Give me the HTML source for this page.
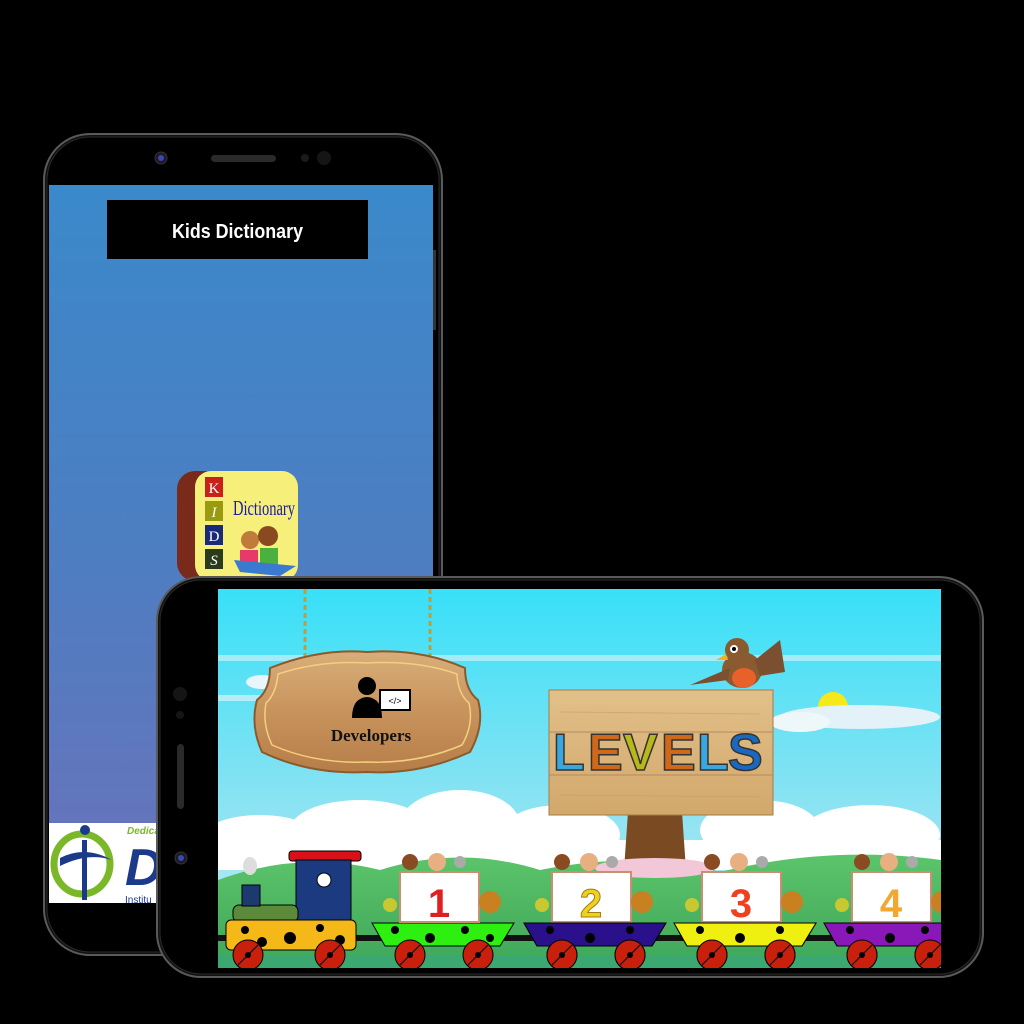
<!DOCTYPE html>
<html><head><style>
html,body{margin:0;padding:0;background:#000;width:1024px;height:1024px;overflow:hidden;font-family:"Liberation Sans",sans-serif}
</style></head><body>
<svg width="1024" height="1024" viewBox="0 0 1024 1024" xmlns="http://www.w3.org/2000/svg">
<defs>
<linearGradient id="lg" x1="0" y1="0" x2="0" y2="1"><stop offset="0" stop-color="#3a89ca"/><stop offset="0.5" stop-color="#4d7ec2"/><stop offset="1" stop-color="#6a72ba"/></linearGradient>
<linearGradient id="sky" x1="0" y1="0" x2="0" y2="1"><stop offset="0" stop-color="#38e0f8"/><stop offset="0.6" stop-color="#8fe3f2"/><stop offset="1" stop-color="#c8eef2"/></linearGradient>
<linearGradient id="wood" x1="0" y1="0" x2="0" y2="1"><stop offset="0" stop-color="#d9ae7a"/><stop offset="0.5" stop-color="#c8935c"/><stop offset="1" stop-color="#b67d48"/></linearGradient>
<linearGradient id="board" x1="0" y1="0" x2="0" y2="1"><stop offset="0" stop-color="#e2c089"/><stop offset="1" stop-color="#d2a86c"/></linearGradient>
<linearGradient id="grass" x1="0" y1="0" x2="0" y2="1"><stop offset="0" stop-color="#5cc46a"/><stop offset="1" stop-color="#3ea659"/></linearGradient>
</defs>
<!-- left phone -->
<rect x="44" y="134" width="398" height="821" rx="46" fill="#111" stroke="#5a5a5a" stroke-width="2"/>
<rect x="47" y="137" width="392" height="815" rx="43" fill="#000" stroke="#2a2a2a" stroke-width="1"/>
<circle cx="161" cy="158" r="6" fill="#1a1a2a" stroke="#333"/><circle cx="161" cy="158" r="3" fill="#3b49a8"/>
<rect x="211" y="155" width="65" height="7" rx="3.5" fill="#2a2a2a"/>
<circle cx="305" cy="158" r="4" fill="#1a1a1a"/><circle cx="324" cy="158" r="7" fill="#151515"/>
<rect x="49" y="185" width="384" height="718" fill="url(#lg)"/>
<rect x="107" y="200" width="261" height="59" fill="#000"/>
<text x="172" y="238" fill="#fff" font-size="20" font-weight="bold" textLength="131" lengthAdjust="spacingAndGlyphs">Kids Dictionary</text>
<rect x="49" y="823" width="384" height="80" fill="#fff"/>
<ellipse cx="82" cy="864" rx="28" ry="30" fill="none" stroke="#7ab82a" stroke-width="7"/>
<rect x="82" y="840" width="5" height="60" fill="#1c3a8a"/><circle cx="85" cy="830" r="5" fill="#1c3a8a"/>
<path d="M60 858 Q85 845 112 860 Q88 852 60 866Z" fill="#1c3a8a"/>
<text x="127" y="834" fill="#7ab82a" font-size="10" font-style="italic" font-weight="bold">Dedica</text>
<text x="125" y="885" fill="#1c3a8a" font-size="52" font-weight="bold" font-style="italic">D</text>
<text x="125" y="903" fill="#1c3a8a" font-size="10">Institu</text>
<rect x="433" y="250" width="3" height="80" fill="#333"/>
<!-- app icon -->
<rect x="177" y="471" width="121" height="110" rx="18" fill="#7a2a1a"/>
<rect x="195" y="471" width="103" height="110" rx="16" fill="#f6ef7a"/>
<rect x="205" y="477" width="18" height="20" fill="#c8201a"/><text x="214" y="493" text-anchor="middle" fill="#fff" font-size="15" font-family="Liberation Serif">K</text>
<rect x="205" y="501" width="18" height="20" fill="#9a9a10"/><text x="214" y="517" text-anchor="middle" fill="#fff" font-size="15" font-family="Liberation Serif" font-style="italic">I</text>
<rect x="205" y="525" width="18" height="20" fill="#1a2a7a"/><text x="214" y="541" text-anchor="middle" fill="#fff" font-size="15" font-family="Liberation Serif">D</text>
<rect x="205" y="549" width="18" height="20" fill="#2a3a1a"/><text x="214" y="565" text-anchor="middle" fill="#fff" font-size="15" font-family="Liberation Serif" font-style="italic">S</text>
<text x="233" y="515" fill="#1a1aa0" font-size="21" font-family="Liberation Serif" textLength="62" lengthAdjust="spacingAndGlyphs">Dictionary</text>
<circle cx="250" cy="540" r="9" fill="#c07a3a"/><circle cx="268" cy="536" r="10" fill="#8a4a20"/>
<rect x="240" y="550" width="18" height="22" fill="#e83a6a"/><rect x="260" y="548" width="18" height="24" fill="#4ab040"/>
<path d="M234 560 L296 566 L280 576 L240 572Z" fill="#3a7ad0"/>
<!-- landscape phone -->
<rect x="157" y="577" width="826" height="400" rx="44" fill="#111" stroke="#5a5a5a" stroke-width="2"/>
<rect x="160" y="580" width="820" height="394" rx="41" fill="#000" stroke="#2a2a2a"/>
<circle cx="180" cy="694" r="7" fill="#151515"/><circle cx="180" cy="715" r="4" fill="#151515"/>
<rect x="177" y="744" width="7" height="65" rx="3.5" fill="#2a2a2a"/>
<circle cx="181" cy="858" r="6" fill="#1a1a2a" stroke="#333"/><circle cx="181" cy="858" r="3" fill="#3b49a8"/>
<svg x="218" y="589" width="723" height="379" viewBox="218 589 723 379">
<rect x="218" y="589" width="723" height="379" fill="url(#sky)"/>
<rect x="218" y="655" width="723" height="6" fill="#d8f2f8" opacity="0.6"/>
<rect x="218" y="695" width="60" height="6" fill="#d8f2f8" opacity="0.7"/>
<ellipse cx="262" cy="682" rx="16" ry="7" fill="#e8f6fb"/>
<circle cx="833" cy="707" r="15" fill="#f7e81a"/>
<ellipse cx="860" cy="717" rx="80" ry="12" fill="#e2f2f8"/>
<ellipse cx="800" cy="722" rx="30" ry="10" fill="#eef8fb"/>
<g fill="#fff">
<ellipse cx="260" cy="840" rx="60" ry="25"/><ellipse cx="360" cy="830" rx="70" ry="30"/><ellipse cx="460" cy="825" rx="60" ry="35"/><ellipse cx="560" cy="835" rx="60" ry="30"/><ellipse cx="760" cy="830" rx="60" ry="30"/><ellipse cx="870" cy="835" rx="70" ry="30"/>
<rect x="218" y="840" width="723" height="30"/>
</g>
<path d="M218 880 Q300 850 380 870 Q460 845 540 870 Q640 850 720 872 Q830 845 941 860 L941 968 L218 968Z" fill="url(#grass)"/>
<rect x="218" y="955" width="723" height="13" fill="#3aa870"/>
<rect x="218" y="935" width="723" height="6" fill="#111"/>
<path d="M628 812 L682 812 L686 870 L624 870Z" fill="#7a4a22"/>
<ellipse cx="655" cy="868" rx="60" ry="10" fill="#f2c8d8"/>
<rect x="549" y="690" width="224" height="125" fill="url(#board)" stroke="#a87a48"/>
<line x1="549" y1="732" x2="773" y2="732" stroke="#b8895a"/><line x1="549" y1="775" x2="773" y2="775" stroke="#b8895a"/>
<line x1="560" y1="712" x2="760" y2="714" stroke="#c79d68" opacity="0.6"/><line x1="560" y1="795" x2="760" y2="797" stroke="#c79d68" opacity="0.6"/>
<g font-family="Liberation Sans" font-weight="bold" font-size="52" stroke="#333" stroke-width="1.5">
<text x="553" y="770" fill="#3aa8e0">L</text><text x="588" y="770" fill="#d0681a">E</text><text x="623" y="770" fill="#b8b81a">V</text><text x="661" y="770" fill="#d0681a">E</text><text x="697" y="770" fill="#3aa8e0">L</text><text x="728" y="770" fill="#1a68c0">S</text>
</g>
<ellipse cx="742" cy="670" rx="20" ry="18" fill="#8a5a30"/>
<ellipse cx="744" cy="678" rx="12" ry="10" fill="#e8602a"/>
<circle cx="737" cy="650" r="12" fill="#8a5a30"/>
<circle cx="734" cy="649" r="4" fill="#fff"/><circle cx="734" cy="649" r="2" fill="#000"/>
<path d="M726 654 L716 660 L728 660Z" fill="#f0b020"/>
<path d="M730 668 L690 685 L728 680Z" fill="#7a5030"/>
<path d="M755 660 L780 640 L785 672 L760 676Z" fill="#7a5030"/>
<g stroke="#c89a30" stroke-width="3" fill="none" stroke-dasharray="5 3">
<line x1="305" y1="589" x2="305" y2="665"/><line x1="430" y1="589" x2="430" y2="665"/>
</g>
<path d="M270 668 Q320 648 367 652 Q420 648 465 668 Q465 690 478 700 Q485 725 470 752 Q420 775 367 772 Q310 775 262 752 Q250 725 257 700 Q270 690 270 668Z" fill="url(#wood)" stroke="#8a5a2a" stroke-width="2"/>
<path d="M278 674 Q320 660 367 663 Q418 660 457 674 Q458 694 469 703 Q474 724 462 745 Q418 764 367 762 Q315 764 272 745 Q262 724 266 703 Q276 694 278 674Z" fill="none" stroke="#f2d080" stroke-width="1.5"/>
<circle cx="367" cy="686" r="9" fill="#000"/><path d="M352 718 Q352 698 367 697 Q382 698 382 718Z" fill="#000"/>
<rect x="380" y="690" width="30" height="20" fill="#fff" stroke="#000" stroke-width="2"/>
<text x="395" y="704" text-anchor="middle" font-size="9" fill="#000">&lt;/&gt;</text>
<text x="371" y="741" text-anchor="middle" font-family="Liberation Serif" font-weight="bold" font-size="17" fill="#111">Developers</text>
<rect x="289" y="851" width="72" height="10" rx="3" fill="#d8101a" stroke="#000"/>
<rect x="296" y="860" width="55" height="62" fill="#1c3a80" stroke="#000"/>
<circle cx="324" cy="880" r="7" fill="#fff" stroke="#000"/>
<rect x="233" y="905" width="65" height="17" rx="6" fill="#5a8a3a" stroke="#000"/>
<rect x="242" y="885" width="18" height="21" fill="#1c3a70" stroke="#000"/>
<ellipse cx="250" cy="866" rx="7" ry="9" fill="#ddd"/>
<rect x="226" y="920" width="130" height="30" rx="5" fill="#f4b818" stroke="#000"/>
<g fill="#000"><circle cx="245" cy="930" r="4"/><circle cx="290" cy="938" r="6"/><circle cx="320" cy="928" r="4"/><circle cx="340" cy="940" r="5"/><circle cx="262" cy="942" r="5"/></g>
<g id="w"><circle cx="248" cy="955" r="15" fill="#c8200c" stroke="#000"/><circle cx="248" cy="955" r="3" fill="#000"/><line x1="238" y1="965" x2="258" y2="945" stroke="#000"/></g>
<use href="#w" x="82"/>
<g id="car">
<path d="M372 923 L514 923 L500 946 L385 946Z" fill="#2ef010" stroke="#000"/>
<g fill="#000"><circle cx="395" cy="930" r="4"/><circle cx="430" cy="938" r="5"/><circle cx="465" cy="930" r="4"/><circle cx="490" cy="938" r="4"/></g>
<use href="#w" x="162"/><use href="#w" x="230"/>
<rect x="400" y="872" width="79" height="50" fill="#fff" stroke="#c89070" stroke-width="2"/>
<circle cx="410" cy="862" r="8" fill="#8a4a22"/><circle cx="437" cy="862" r="9" fill="#e8b080"/><circle cx="460" cy="862" r="6" fill="#aaa"/>
<circle cx="490" cy="902" r="11" fill="#c88020"/><circle cx="390" cy="905" r="7" fill="#c8c830"/>
</g>
<text x="439" y="917" text-anchor="middle" font-size="40" font-weight="bold" fill="#e02020">1</text>
<g transform="translate(152,0)"><use href="#car"/></g>
<g transform="translate(302,0)"><use href="#car"/></g>
<g transform="translate(452,0)"><use href="#car"/></g>
<path d="M524 923 L666 923 L652 946 L537 946Z" fill="#2a108a" stroke="#000"/>
<path d="M674 923 L816 923 L802 946 L687 946Z" fill="#f0f010" stroke="#000"/>
<path d="M824 923 L966 923 L952 946 L837 946Z" fill="#8a18b8" stroke="#000"/>
<g fill="#000"><circle cx="550" cy="930" r="4"/><circle cx="590" cy="938" r="5"/><circle cx="630" cy="930" r="4"/><circle cx="700" cy="930" r="4"/><circle cx="740" cy="938" r="5"/><circle cx="780" cy="930" r="4"/><circle cx="850" cy="930" r="4"/><circle cx="890" cy="938" r="5"/><circle cx="925" cy="930" r="4"/></g>
<use href="#w" x="314"/><use href="#w" x="382"/><use href="#w" x="464"/><use href="#w" x="532"/><use href="#w" x="614"/><use href="#w" x="682"/>
<text x="591" y="917" text-anchor="middle" font-size="40" font-weight="bold" fill="#f0d020" stroke="#a08010">2</text>
<text x="741" y="917" text-anchor="middle" font-size="40" font-weight="bold" fill="#f04020">3</text>
<text x="891" y="917" text-anchor="middle" font-size="40" font-weight="bold" fill="#f0a830">4</text>
</svg>
</svg>
</body></html>
